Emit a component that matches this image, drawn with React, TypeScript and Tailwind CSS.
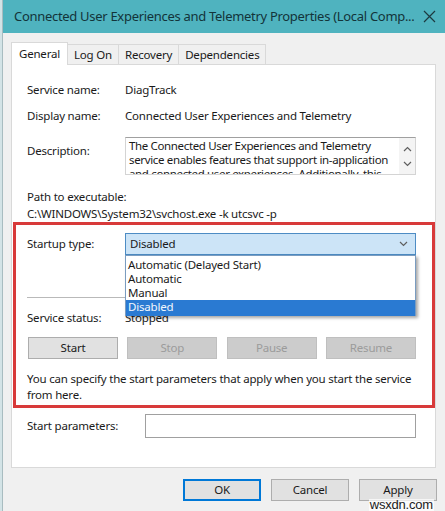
import React from 'react';

const Chevron = ({ up = false, className = '' }: { up?: boolean; className?: string }) => (
  <svg width="9" height="6" viewBox="0 0 9 6" className={className}>
    <polyline
      points={up ? '1,5 4.5,1.5 8,5' : '1,1 4.5,4.5 8,1'}
      fill="none"
      stroke="#5f5f5f"
      strokeWidth="1.2"
    />
  </svg>
);

const Tab = ({ label, active = false }: { label: string; active?: boolean }) =>
  active ? (
    <div className="h-[23px] px-[7px] bg-white border border-b-0 border-[#d9d9d9] flex items-center -mb-px relative z-10">
      {label}
    </div>
  ) : (
    <div className="h-[20px] px-[6px] bg-[#f0f0f0] border border-b-0 border-l-0 border-[#d9d9d9] flex items-center">
      {label}
    </div>
  );

const ActionButton = ({ label, disabled = false }: { label: string; disabled?: boolean }) => (
  <div
    className={
      disabled
        ? 'w-[90px] h-[22px] bg-[#cccccc] border border-[#bfbfbf] text-[#9b9b9b] flex items-center justify-center'
        : 'w-[90px] h-[22px] bg-[#e1e1e1] border border-[#adadad] flex items-center justify-center'
    }
  >
    {label}
  </div>
);

const DialogButton = ({ label, primary = false }: { label: string; primary?: boolean }) => (
  <div
    className={
      primary
        ? 'w-[78px] h-[22px] bg-[#e1e1e1] border-2 border-[#0078d7] flex items-center justify-center'
        : 'w-[78px] h-[22px] bg-[#e1e1e1] border border-[#adadad] flex items-center justify-center'
    }
  >
    {label}
  </div>
);

export default function App() {
  return (
    <div className="w-[445px] h-[511px] bg-[#f0f0f0] relative overflow-hidden flex font-['Noto_Sans',sans-serif] text-[11.5px] tracking-[-0.2px] text-[#1a1a1a]">
      {/* left edge of the window behind */}
      <div className="w-[3px] shrink-0 bg-[#d3e3e6] border-r border-[#a8bcc0]" />

      <div className="flex-1 min-w-0 flex flex-col">
        {/* title bar */}
        <div className="h-[33px] bg-[#4fb3bf] flex items-center justify-between pl-[11px] pr-[9px] text-[#13343a] text-[13px] tracking-[-0.3px]">
          <span className="whitespace-nowrap overflow-hidden min-w-0">
            Connected User Experiences and Telemetry Properties (Local Comp...
          </span>
          <svg width="13" height="13" viewBox="0 0 13 13" className="shrink-0 ml-2">
            <path d="M1 1L12 12M12 1L1 12" stroke="#1d3a40" strokeWidth="1.2" />
          </svg>
        </div>

        {/* tabs */}
        <div className="ml-[8px] mt-[9px] flex items-end">
          <Tab label="General" active />
          <Tab label="Log On" />
          <Tab label="Recovery" />
          <Tab label="Dependencies" />
        </div>

        {/* tab page */}
        <div className="ml-[8px] w-[425px] h-[404px] bg-white border border-[#d9d9d9] flex flex-col">
          <div className="pl-[15px] pt-[17px] flex flex-col">
            <div className="flex leading-[16px]">
              <span className="w-[98px]">Service name:</span>
              <span>DiagTrack</span>
            </div>
            <div className="flex leading-[16px] mt-[10px]">
              <span className="w-[98px]">Display name:</span>
              <span>Connected User Experiences and Telemetry</span>
            </div>
            <div className="flex mt-[13px]">
              <span className="w-[98px] pt-[5px]">Description:</span>
              <div className="w-[291px] h-[38px] border border-[#d4d4d4] border-t-[#a0a0a0] flex overflow-hidden">
                <div className="flex-1 min-w-0 pl-[3px] pt-[1px] leading-[14px] tracking-[-0.35px] whitespace-nowrap overflow-hidden">
                  The Connected User Experiences and Telemetry
                  <br />
                  service enables features that support in-application
                  <br />
                  and connected user experiences. Additionally, this
                </div>
                <div className="w-[16px] shrink-0 bg-[#f4f4f4] flex flex-col items-center pt-[8px] gap-[9px]">
                  <Chevron up />
                  <Chevron />
                </div>
              </div>
            </div>
            <div className="mt-[13px] leading-[17px]">Path to executable:</div>
            <div className="leading-[17px]">C:\WINDOWS\System32\svchost.exe -k utcsvc -p</div>
          </div>

          {/* highlighted startup area */}
          <div className="ml-[1px] h-[186px] border-[3px] border-[#d83a3a] pl-[11px] flex flex-col relative">
            <div className="mt-[8px] flex items-center">
              <span className="w-[98px]">Startup type:</span>
              <div className="w-[291px] h-[22px] bg-[#cce4f7] border border-[#4d8cc4] flex items-center justify-between pl-[4px] pr-[7px]">
                <span>Disabled</span>
                <Chevron />
              </div>
            </div>

            <div className="mt-[42px] w-[389px] h-px bg-[#b9b9b9]" />

            <div className="mt-[12px] flex leading-[16px]">
              <span className="w-[98px]">Service status:</span>
              <span>Stopped</span>
            </div>

            <div className="mt-[11px] ml-[1px] w-[388px] flex justify-between">
              <ActionButton label="Start" />
              <ActionButton label="Stop" disabled />
              <ActionButton label="Pause" disabled />
              <ActionButton label="Resume" disabled />
            </div>

            <div className="mt-[12px] leading-[16px] whitespace-nowrap">
              You can specify the start parameters that apply when you start the service
              <br />
              from here.
            </div>

            {/* open drop-down list */}
            <div className="absolute left-[109px] top-[30px] w-[291px] h-[61px] bg-white border border-[#7a9cc0] shadow-[2px_2px_3px_rgba(0,0,0,0.35)] pt-[2px] leading-[14px] z-20">
              <div className="pl-[2px]">Automatic (Delayed Start)</div>
              <div className="pl-[2px]">Automatic</div>
              <div className="pl-[2px]">Manual</div>
              <div className="pl-[2px] h-[16px] bg-[#2a7ad2] text-[#f2f7fd]">Disabled</div>
            </div>
          </div>

          <div className="pl-[15px] mt-[6px] flex items-center">
            <span className="w-[118px]">Start parameters:</span>
            <div className="w-[271px] h-[24px] border border-[#a0a0a0] bg-white" />
          </div>
        </div>

        {/* dialog buttons */}
        <div className="mt-[11px] mr-[8px] flex justify-end gap-[10px]">
          <DialogButton label="OK" primary />
          <DialogButton label="Cancel" />
          <DialogButton label="Apply" />
        </div>
      </div>

      {/* site watermark */}
      <div className="absolute right-[11px] bottom-0 h-[12px] px-[1px] bg-white/70 text-[13px] leading-[12px] text-[#1a1a1a] font-['Liberation_Sans',sans-serif]">
        wsxdn.com
      </div>
    </div>
  );
}
